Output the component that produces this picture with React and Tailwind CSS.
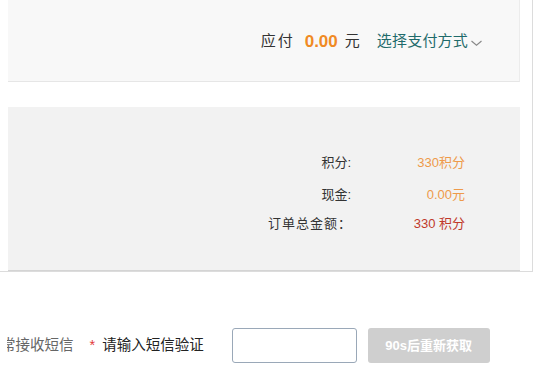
export default function App() {
  return (
    <div
      className="w-[537px] h-[378px] bg-white overflow-hidden relative"
      style={{ fontFamily: '"Liberation Sans", "Noto Sans CJK SC", sans-serif' }}
    >
      <div className="w-[533px] border-r border-b border-[#dcdcdc] pl-2 pr-3">
        {/* Payment summary */}
        <div className="h-[82px] bg-[#f8f8f8] border-b border-[#e6e6e6] border-r border-r-[#ececec] flex items-center justify-end pr-[36px] pt-[2px] text-[15px]">
          <span className="text-[#333] tracking-[2px]">应付</span>
          <span className="ml-[10px] text-[#f08a24] font-bold text-[17px]">0.00</span>
          <span className="ml-[7px] text-[#333]">元</span>
          <span className="ml-[17px] text-[#1f6b6b] tracking-[0.2px]">选择支付方式</span>
          <svg className="w-[13px] h-[12px] ml-[2px] mt-[3px]" viewBox="0 0 13 12" fill="none" stroke="#888" strokeWidth="1.1">
            <path d="M1.5 4l5 4.2 5-4.2" />
          </svg>
        </div>

        <div className="h-[25px] bg-white" />

        {/* Order totals */}
        <div className="h-[164px] bg-[#f2f2f2] border-b border-[#d4d4d4] flex flex-col items-end pt-[46px] pr-[55px] text-[13px] gap-[13px]">
          <div className="flex">
            <span className="w-[100px] text-right text-[#333]">积分:</span>
            <span className="w-[114px] text-right text-[#ee9a4a]">330积分</span>
          </div>
          <div className="flex -mt-[1px]">
            <span className="w-[100px] text-right text-[#333]">现金:</span>
            <span className="w-[114px] text-right text-[#ee9a4a]">0.00元</span>
          </div>
          <div className="flex -mt-[3px]">
            <span className="w-[100px] text-left pl-[17px] text-[#333] tracking-[1px] whitespace-nowrap">订单总金额：</span>
            <span className="w-[114px] text-right text-[#c0392b]">330 积分</span>
          </div>
        </div>
      </div>

      {/* SMS verification */}
      <div className="flex items-center mt-[56px] text-[14.5px] ml-[7px] overflow-hidden">
        <span className="-ml-[6px] text-[#666] whitespace-nowrap">常接收短信</span>
        <span className="ml-[16px] text-[#e23b3b]">*</span>
        <span className="ml-[7px] text-[#222] whitespace-nowrap">请输入短信验证</span>
        <input className="ml-[28px] w-[125px] h-[35px] border border-[#9aa8b8] rounded-[3px] bg-white outline-none shrink-0" />
        <button className="ml-[11px] w-[122px] h-[35px] rounded-[3px] bg-[#cfcfcf] text-white font-bold text-[13px] shrink-0">
          90s后重新获取
        </button>
      </div>
    </div>
  );
}
